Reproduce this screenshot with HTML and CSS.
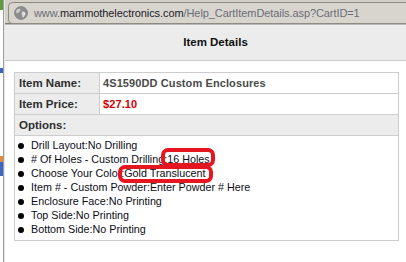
FILE: index.html
```html
<!DOCTYPE html>
<html lang="en">
<head>
  <meta charset="UTF-8" />
  <title>Item Details</title>
  <link rel="stylesheet" href="styles.css">
</head>
<body>

<div class="screen">
  <div class="side"></div>
  <div class="window">
    <div class="addressbar">
      <div class="field">
        <svg class="globe" width="14" height="14" viewBox="0 0 14 14">
          <circle cx="7" cy="7" r="6.5" fill="#8d8d8d"/>
          <path d="M3 3.5 C4.5 2.5 6 2.6 6.8 3.4 C6.2 4.6 5.2 4.9 5.6 6.2 C4.6 6.8 3.4 6.3 2.6 7.4 C1.9 6 2.1 4.5 3 3.5 Z" fill="#cfcfcf"/>
          <path d="M8.2 5.6 C9.6 5.2 11.2 6 11.6 7.6 C11.2 9.6 10 11 8.6 11.8 C8.2 10.6 8.8 9.4 7.8 8.6 C7.4 7.6 7.6 6.4 8.2 5.6 Z" fill="#dedede"/>
          <circle cx="7" cy="7" r="6.5" fill="none" stroke="#777" stroke-width="0.6"/>
        </svg>
        <span class="url"><span class="dim">www.</span>mammothelectronics.com<span class="dim">/Help_CartItemDetails.asp?CartID=1</span></span>
      </div>
    </div>

    <div class="page">
      <div class="title">Item Details</div>

      <div class="content">
        <table class="details">
          <tr>
            <td class="label">Item Name:</td>
            <td class="value">4S1590DD Custom Enclosures</td>
          </tr>
          <tr>
            <td class="label">Item Price:</td>
            <td class="value price">$27.10</td>
          </tr>
          <tr>
            <td class="label" colspan="2">Options:</td>
          </tr>
          <tr>
            <td class="options" colspan="2">
              <ul>
                <li>Drill Layout:No Drilling</li>
                <li># Of Holes - Custom Drilling:<span class="circled first">16 Holes</span></li>
                <li>Choose Your Color:<span class="circled second">Gold Translucent</span></li>
                <li>Item # - Custom Powder:Enter Powder # Here</li>
                <li>Enclosure Face:No Printing</li>
                <li>Top Side:No Printing</li>
                <li>Bottom Side:No Printing</li>
              </ul>
            </td>
          </tr>
        </table>
      </div>
    </div>
  </div>
</div>

</body>
</html>
```

FILE: styles.css
```css
body {
  margin: 0;
  background-color: #fff;
  font-family: "Liberation Sans", Arial, sans-serif;
  overflow: hidden;
}
.screen {
  display: flex;
  width: 406px;
  height: 262px;
  overflow: hidden;
}
.side {
  width: 3px;
  flex-shrink: 0;
  background: linear-gradient(to bottom, #5d9b35 0, #5d9b35 10px, #fff 10px, #fff 68px, #3d66c4 68px, #3d66c4 73px, #fff 73px, #fff 156px, #e08a3a 156px, #e08a3a 162px, #3d66c4 162px, #3d66c4 176px, #fff 176px);
  border-right: 1px solid #9e9e9e;
}
.window {
  flex: 1;
  display: flex;
  flex-direction: column;
  border-left: 1px solid #e6e6e6;
  min-width: 0;
}
.addressbar {
  height: 24px;
  background-color: #d4d0c8;
  padding: 2px 0 0 3px;
  box-sizing: border-box;
  border-bottom: 1px solid #7f7f7f;
}
.field {
  height: 20px;
  display: flex;
  align-items: center;
  background-color: #d8d5ce;
  border: 1px solid #8e8b85;
  border-right: none;
  border-radius: 5px 0 0 5px;
  white-space: nowrap;
  overflow: hidden;
}
.globe {
  margin: 0 6px 0 5px;
  flex-shrink: 0;
}
.url {
  font-size: 11px;
  color: #1c1c2a;
  letter-spacing: -0.08px;
}
.url .dim {
  color: #6c6c78;
}
.page {
  flex: 1;
  border-top: 1px solid #b9b9b9;
  background-color: #fff;
}
.title {
  height: 35px;
  line-height: 35px;
  background-color: #ececec;
  border-bottom: 1px solid #cbcbcb;
  text-align: center;
  padding-left: 20px;
  font-size: 11.5px;
  font-weight: bold;
  color: #111;
}
.content {
  padding: 11px 7px 0 9px;
}
.details {
  width: 100%;
  border-collapse: collapse;
}
.details td {
  border: 1px solid #cccccc;
  padding: 0;
  line-height: 20px;
  height: 20px;
}
.label {
  width: 80px;
  padding-left: 4px !important;
  background-color: #ececec;
  font-size: 11.5px;
  font-weight: bold;
  color: #2e2e2e;
}
.value {
  padding-left: 3px !important;
  font-size: 11px;
  font-weight: bold;
  color: #4a4a4a;
  letter-spacing: 0.1px;
}
.price {
  color: #d00000;
}
.options {
  padding: 2px 0 4px 0 !important;
  line-height: 14px !important;
}
.options ul {
  list-style: none;
  margin: 0;
  padding: 0;
}
.options li {
  height: 14px;
  font-size: 10.75px;
  color: #0c0c18;
  white-space: nowrap;
}
.options li::before {
  content: "";
  display: inline-block;
  width: 6px;
  height: 6px;
  border-radius: 50%;
  background-color: #000;
  margin: 0 7px 1px 3px;
  vertical-align: middle;
}
.circled {
  position: relative;
}
.circled::after {
  content: "";
  position: absolute;
  border: 4px solid #e5161f;
  border-radius: 7px;
}
.circled.first::after {
  left: -6px;
  right: -5px;
  top: -5px;
  bottom: -2px;
}
.circled.second::after {
  left: -6px;
  right: -7px;
  top: -2px;
  bottom: -4px;
}
```
